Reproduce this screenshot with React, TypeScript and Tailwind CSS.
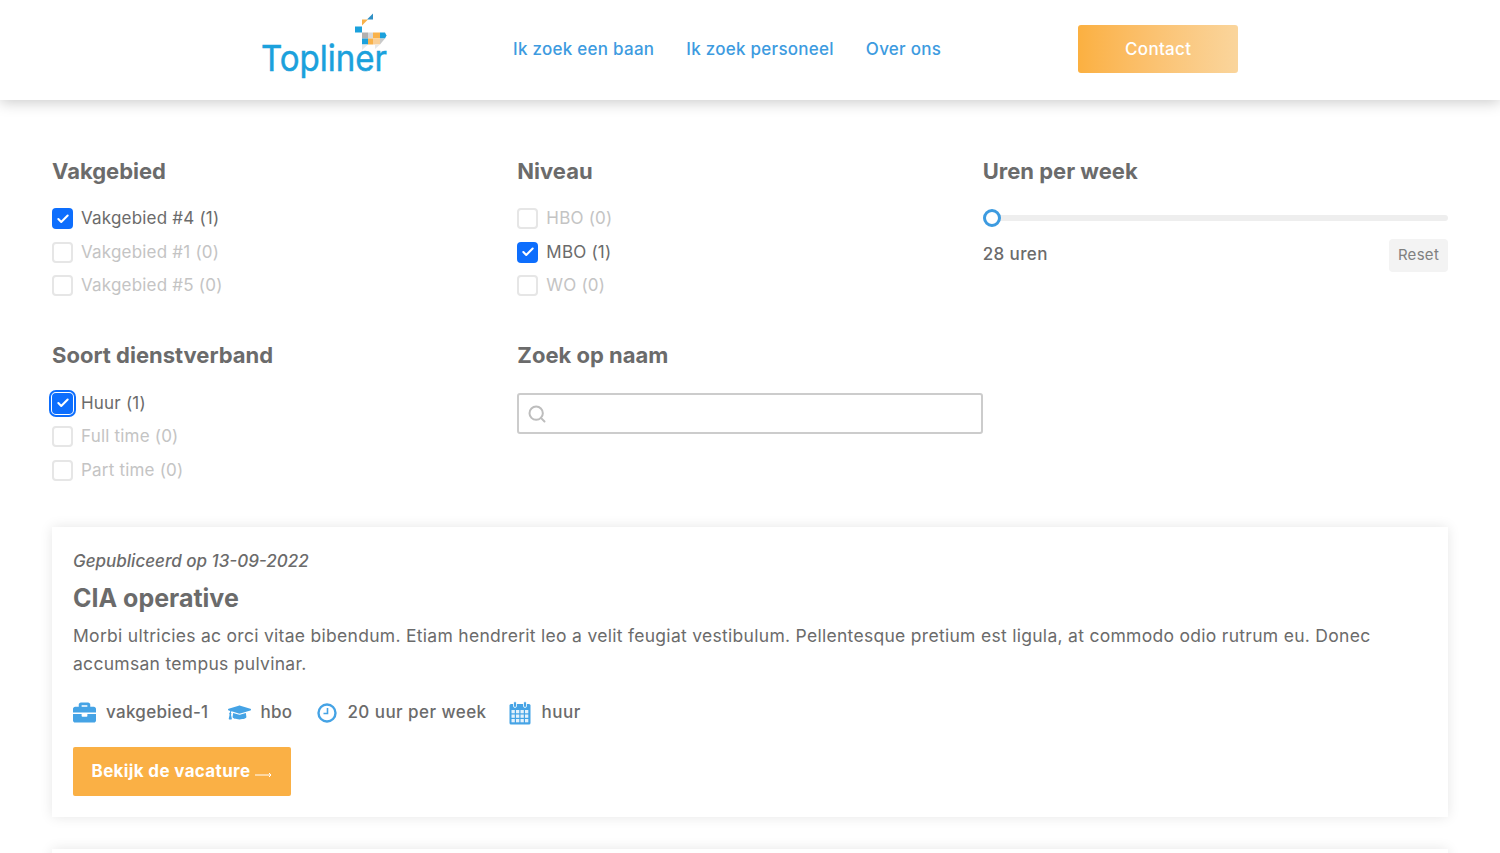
import { Check, Search } from "lucide-react"
import { FaBriefcase, FaGraduationCap } from "react-icons/fa"

const font = "font-['Inter','Liberation_Sans',sans-serif]"

type Option = { label: string; checked?: boolean; focus?: boolean }

function Logo() {
  return (
    <svg width="146" height="76" viewBox="0 0 146 76" className="block">
      <text x="0" y="59.5" fontFamily="Inter" fontWeight="400" fontSize="36" fill="#1ba1dc" stroke="#1ba1dc" strokeWidth="0.5" textLength="126" lengthAdjust="spacingAndGlyphs">
        Topliner
      </text>
      <polygon points="106,8.5 112,2.5 112,8.5" fill="#2f8fc4" />
      <polygon points="101,14.5 107,8.5 101,8.5" fill="#f9b24a" />
      <rect x="94" y="15.5" width="7" height="6" fill="#1ba1dc" />
      <rect x="101" y="21.5" width="6" height="6" fill="#b0b0b0" />
      <rect x="107" y="21.5" width="5" height="6" fill="#d8d8d8" />
      <rect x="112" y="21.5" width="7" height="6" fill="#f9b24a" />
      <path d="M119 21.5h5l1.5 3-1.5 3h-5z" fill="#1ba1dc" />
      <rect x="101" y="27.5" width="6" height="6" fill="#1ba1dc" />
      <rect x="107" y="27.5" width="5" height="6" fill="#f9b24a" />
      <rect x="112" y="27.5" width="7" height="6" fill="#f9cf97" />
      <polygon points="119,27.5 124,27.5 119,33.5" fill="#c9c9c9" />
      <polygon points="101,33.5 107,33.5 101,39" fill="#e8e8e8" />
      <polygon points="114,33.5 119,33.5 114,38" fill="#e8e8e8" />
    </svg>
  )
}

function Header() {
  return (
    <header className="h-[100px] bg-white shadow-[0_2px_14px_rgba(0,0,0,0.22)] flex items-center relative z-10">
      <div className="ml-[261px] mt-[-3px]">
        <Logo />
      </div>
      <nav className="flex gap-8 ml-[106px] text-[17px] font-medium tracking-[0.26px] text-[#3d9be0]">
        <a href="#">Ik zoek een baan</a>
        <a href="#">Ik zoek personeel</a>
        <a href="#">Over ons</a>
      </nav>
      <a href="#" className="ml-[137px] mt-[-2px] pt-[1px] w-[160px] h-12 rounded-[3px] flex items-center justify-center text-white text-[17px] font-medium tracking-[0.3px] bg-gradient-to-r from-[#fbb040] to-[#fad59c]">
        Contact
      </a>
    </header>
  )
}

function CheckRow({ label, checked, focus }: Option) {
  return (
    <label className={`flex items-center h-[33.5px] gap-2 text-[17px] tracking-[0.2px] ${checked ? "text-[#6b6b6b]" : "text-[#c4c4c4]"}`}>
      <span className={`w-[21px] h-[21px] rounded-[4px] flex items-center justify-center shrink-0 ${checked ? "bg-[#0d6efd]" : "border-2 border-[#e6e6e6]"} ${focus ? "outline-2 outline-offset-1 outline-[#0d6efd]" : ""}`}>
        {checked && <Check size={14} strokeWidth={3.5} color="white" />}
      </span>
      {label}
    </label>
  )
}

function FilterGroup({ title, options }: { title: string; options: Option[] }) {
  return (
    <div>
      <Title>{title}</Title>
      {options.map((o) => (
        <CheckRow key={o.label} {...o} />
      ))}
    </div>
  )
}

function Title({ children }: { children: string }) {
  return <h3 className="text-[22px] leading-[28px] font-bold text-[#6b6b6b] mb-[17.5px]">{children}</h3>
}

function Filters() {
  return (
    <section className="grid grid-cols-3 px-[52px] pt-[56.5px] gap-y-[38.5px]">
      <FilterGroup
        title="Vakgebied"
        options={[
          { label: "Vakgebied #4 (1)", checked: true },
          { label: "Vakgebied #1 (0)" },
          { label: "Vakgebied #5 (0)" },
        ]}
      />
      <FilterGroup
        title="Niveau"
        options={[
          { label: "HBO (0)" },
          { label: "MBO (1)", checked: true },
          { label: "WO (0)" },
        ]}
      />
      <div>
        <Title>Uren per week</Title>
        <div className="h-[6px] bg-[#eeeeee] rounded-full flex items-center mt-[30px]">
          <span className="w-[18px] h-[18px] rounded-full bg-white border-[3px] border-[#3d9be0]" />
        </div>
        <div className="flex items-center justify-between mt-[18px]">
          <span className="text-[17px] font-medium tracking-[0.4px] text-[#6b6b6b]">28 uren</span>
          <button className="h-[33px] w-[59px] rounded-[4px] bg-[#f3f3f3] text-[15px] tracking-[0.3px] text-[#808080]">Reset</button>
        </div>
      </div>
      <FilterGroup
        title="Soort dienstverband"
        options={[
          { label: "Huur (1)", checked: true, focus: true },
          { label: "Full time (0)" },
          { label: "Part time (0)" },
        ]}
      />
      <div>
        <Title>Zoek op naam</Title>
        <div className="h-[41px] mt-[24px] border-2 border-[#cccccc] rounded-[3px] flex items-center pl-[8px]">
          <Search size={20} strokeWidth={2.4} color="#bdbdbd" />
        </div>
      </div>
    </section>
  )
}

function ClockIcon() {
  return (
    <svg width="20" height="20" viewBox="0 0 20 20" fill="none" stroke="#45a3e5">
      <circle cx="10" cy="10" r="8.5" strokeWidth="2.4" />
      <path d="M10.5 5v5.5H6.5" strokeWidth="1.6" />
    </svg>
  )
}

function CalendarIcon() {
  return (
    <svg width="22" height="24" viewBox="0 0 22 24" fill="none">
      <rect x="0.5" y="3" width="21" height="20.5" rx="1.5" fill="#45a3e5" />
      <g fill="#e4f1fb">
        {[9, 13.5, 18].map((y) =>
          [2.5, 7, 11.5, 16].map((x) => <rect key={`${x}-${y}`} x={x} y={y} width="3.3" height="3.3" />)
        )}
      </g>
      <rect x="4.5" y="0.5" width="3" height="6" rx="1.5" fill="#45a3e5" stroke="#fff" strokeWidth="0.8" />
      <rect x="14.5" y="0.5" width="3" height="6" rx="1.5" fill="#45a3e5" stroke="#fff" strokeWidth="0.8" />
    </svg>
  )
}

function Card() {
  return (
    <article className="mx-[52px] mt-[39.5px] p-[21px] h-[290px] bg-white shadow-[0_0_12px_rgba(0,0,0,0.1)] text-[#6b6b6b]">
      <p className="text-[17px] italic font-medium leading-[26px]">Gepubliceerd op 13-09-2022</p>
      <h2 className="text-[25px] font-bold leading-[32px] mt-[8px]">CIA operative</h2>
      <p className="text-[17.5px] tracking-[0.29px] leading-[28px] mt-[8px]">
        Morbi ultricies ac orci vitae bibendum. Etiam hendrerit leo a velit feugiat vestibulum. Pellentesque pretium est ligula, at commodo odio rutrum eu. Donec accumsan tempus pulvinar.
      </p>
      <div className="flex items-center h-[26px] mt-[22px] text-[17px] font-medium tracking-[0.3px]">
        <FaBriefcase size={23} color="#45a3e5" />
        <span className="ml-[10px]">vakgebied-1</span>
        <span className="ml-[20px]"><FaGraduationCap size={23} color="#45a3e5" /></span>
        <span className="ml-[9px]">hbo</span>
        <span className="ml-[25px]"><ClockIcon /></span>
        <span className="ml-[10px] tracking-[0.45px]">20 uur per week</span>
        <span className="ml-[22px]"><CalendarIcon /></span>
        <span className="ml-[11px] tracking-[0.5px]">huur</span>
      </div>
      <a href="#" className="mt-[21px] pt-[2px] w-[218px] h-[49px] rounded-[2px] bg-[#fab045] text-white font-bold text-[17px] tracking-[0.35px] flex items-center justify-center gap-[5px]">
        Bekijk de vacature
        <svg width="17" height="6" viewBox="0 0 17 6" fill="none" stroke="#fff" className="mt-[6px]">
          <path d="M0 3h16M14 1l2 2-2 2" />
        </svg>
      </a>
    </article>
  )
}

export default function App() {
  return (
    <div className={`${font} bg-white min-h-screen overflow-hidden h-[853px]`}>
      <Header />
      <Filters />
      <Card />
      <div className="mx-[52px] mt-[32px] h-[100px] bg-white shadow-[0_0_12px_rgba(0,0,0,0.1)]" />
    </div>
  )
}
